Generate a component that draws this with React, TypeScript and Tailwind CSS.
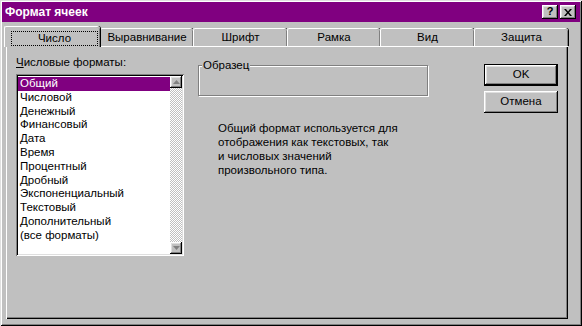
import React from "react";

const raised =
  "shadow-[inset_-1px_-1px_0_#000,inset_1px_1px_0_#fff,inset_-2px_-2px_0_#808080,inset_2px_2px_0_#dfdfdf]";

function Arrow({ up }: { up?: boolean }) {
  return (
    <div className={`w-[12px] h-[12px] bg-[#c0c0c0] flex items-center justify-center ${raised}`}>
      <svg width="7" height="4" viewBox="0 0 7 4">
        {up ? (
          <polygon points="3.5,0 7,4 0,4" fill="#808080" />
        ) : (
          <polygon points="0,0 7,0 3.5,4" fill="#808080" />
        )}
      </svg>
    </div>
  );
}

const items = [
  "Общий",
  "Числовой",
  "Денежный",
  "Финансовый",
  "Дата",
  "Время",
  "Процентный",
  "Дробный",
  "Экспоненциальный",
  "Текстовый",
  "Дополнительный",
  "(все форматы)",
];

const tabs: { label: string; w: string }[] = [
  { label: "Выравнивание", w: "w-[93px]" },
  { label: "Шрифт", w: "w-[94px]" },
  { label: "Рамка", w: "w-[93px]" },
  { label: "Вид", w: "w-[94px]" },
  { label: "Защита", w: "w-[94px]" },
];

export default function App() {
  return (
    <div className="w-[582px] h-[326px] bg-[#c0c0c0] p-[2px] flex flex-col font-['Liberation_Sans',Arial,sans-serif] text-[11.5px] text-black shadow-[inset_1px_1px_0_#dfdfdf,inset_-1px_-1px_0_#000,inset_2px_2px_0_#fff,inset_-2px_-2px_0_#808080] overflow-hidden select-none">
      {/* Title bar */}
      <div className="h-[20px] bg-[#800080] flex items-center justify-between pl-[3px] pr-[4px]">
        <span className="text-white font-bold text-[12px] leading-none">Формат ячеек</span>
        <div className="flex gap-[2px]">
          <div className={`w-[16px] h-[14px] bg-[#c0c0c0] flex items-center justify-center ${raised}`}>
            <span className="font-bold text-[11px] leading-none -mt-px">?</span>
          </div>
          <div className={`w-[16px] h-[14px] bg-[#c0c0c0] flex items-center justify-center ${raised}`}>
            <svg width="8" height="7" viewBox="0 0 8 7">
              <path d="M0 0h2l2 2.5L6 0h2L5 3.5 8 7H6L4 4.5 2 7H0l3-3.5z" fill="#000" />
            </svg>
          </div>
        </div>
      </div>

      {/* Tabs */}
      <div className="mt-[4px] h-[20px] flex items-end pl-[2px]">
        <div className="relative z-10 w-[96px] h-[21px] -mb-px bg-[#c0c0c0] border-l border-t border-white rounded-tl-[2px] rounded-tr-[3px] shadow-[inset_-1px_0_0_#808080,1px_0_0_#000] pt-[4px] pl-[6px] pr-[2px]">
          <div className="h-[15px] border border-dotted border-black flex items-center justify-center leading-none">
            Число
          </div>
        </div>
        {tabs.map((t) => (
          <div
            key={t.label}
            className={`${t.w} h-[18px] bg-[#c0c0c0] border-l border-t border-white rounded-tl-[2px] rounded-tr-[3px] shadow-[inset_-1px_0_0_#808080,1px_0_0_#000] flex items-center justify-center leading-none`}
          >
            {t.label}
          </div>
        ))}
      </div>

      {/* Panel */}
      <div className="ml-[4px] w-[562px] h-[273px] bg-[#c0c0c0] flex items-start pl-[10px] shadow-[inset_1px_1px_0_#fff,inset_-1px_-1px_0_#000,inset_-2px_-2px_0_#808080]">
        {/* Left column */}
        <div className="w-[168px] pt-[9px] flex flex-col">
          <div className="h-[14px] leading-[14px]">
            <span className="underline">Ч</span>исловые форматы:
          </div>
          <div className="mt-[5px] h-[182px] bg-white p-[2px] flex shadow-[inset_1px_1px_0_#808080,inset_-1px_-1px_0_#fff,inset_2px_2px_0_#000,inset_-2px_-2px_0_#dfdfdf]">
            <div className="w-[152px] flex flex-col pt-[1px]">
              {items.map((it, i) => (
                <div
                  key={it}
                  className={`h-[13.8px] leading-[13.8px] pl-[2px] whitespace-nowrap ${
                    i === 0 ? "bg-[#800080] text-white" : ""
                  }`}
                >
                  {it}
                </div>
              ))}
            </div>
            <div className="w-[12px] flex flex-col bg-[repeating-conic-gradient(#c0c0c0_0%_25%,#ffffff_0%_50%)] bg-[length:2px_2px]">
              <Arrow up />
              <div className="flex-1" />
              <Arrow />
            </div>
          </div>
        </div>

        {/* Middle column */}
        <div className="ml-[14px] w-[230px] pt-[19px] flex flex-col">
          <div className="relative h-[31px] border border-[#808080] shadow-[1px_1px_0_#fff,inset_1px_1px_0_#fff]">
            <span className="absolute left-[3px] -top-[8px] bg-[#c0c0c0] px-px leading-[14px]">Образец</span>
          </div>
          <div className="mt-[25px] ml-[20px] leading-[14px]">
            <div>Общий формат используется для</div>
            <div>отображения как текстовых, так</div>
            <div>и числовых значений</div>
            <div>произвольного типа.</div>
          </div>
        </div>

        {/* Right column */}
        <div className="ml-[56px] w-[74px] pt-[18px] flex flex-col gap-[5px]">
          <div className="h-[22px] border border-black">
            <div className={`h-full flex items-center justify-center ${raised}`}>OK</div>
          </div>
          <div className={`h-[22px] flex items-center justify-center ${raised}`}>Отмена</div>
        </div>
      </div>
    </div>
  );
}
